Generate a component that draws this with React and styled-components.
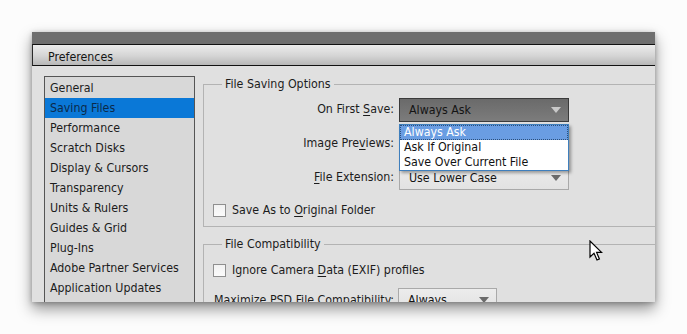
import React from "react";
import styled, { createGlobalStyle } from "styled-components";

const Global = createGlobalStyle`
  html, body { margin: 0; padding: 0; background: #fcfcfc; }
  body {
    font-family: "DejaVu Sans Condensed", "DejaVu Sans", sans-serif;
    font-stretch: condensed;
    font-size: 12.3px;
    color: #1a1a1a;
  }
`;

const Page = styled.div`
  width: 687px;
  height: 334px;
  padding: 32px 0 0 32px;
  box-sizing: border-box;
  overflow: hidden;
`;

const Window = styled.div`
  position: relative;
  width: 623px;
  height: 270px;
  display: flex;
  flex-direction: column;
  background: #e0e0e0;
  box-shadow: 0 7px 14px rgba(0, 0, 0, 0.42), 0 1px 5px rgba(0, 0, 0, 0.25);
  overflow: hidden;
`;

const TopStrip = styled.div`
  height: 12px;
  background: #6e6e6e;
  flex: none;
`;

const TitleBar = styled.div`
  flex: none;
  display: flex;
  align-items: center;
  padding: 3px 0 0 15px;
  box-sizing: content-box;
  height: 17px;
  border-top: 1px solid #111;
  border-bottom: 1px solid #111;
  border-left: 1px solid #2a2a2a;
  background: linear-gradient(#ececec, #d4d4d4 55%, #b7b7b7);
  color: #151515;
`;

const Body = styled.div`
  flex: 1;
  display: flex;
  padding: 10px 0 0 12px;
  min-height: 0;
`;

const Sidebar = styled.ul`
  list-style: none;
  margin: 0;
  padding: 1px 0 0 0;
  width: 151px;
  box-sizing: border-box;
  flex: none;
  border: 1px solid #555;
  border-bottom: none;
  background: #d8d8d8;
`;

const NavItem = styled.li`
  height: 20px;
  line-height: 20px;
  padding-left: 5px;
  white-space: nowrap;
  background: ${(p) => (p.$active ? "#0a78d7" : "transparent")};
  color: ${(p) => (p.$active ? "#0b2a4a" : "#1c1c1c")};
`;

const Main = styled.div`
  flex: 1;
  margin-left: 8px;
  padding-top: 1px;
  display: flex;
  flex-direction: column;
  gap: 10px;
  min-width: 0;
`;

const Group = styled.fieldset`
  margin: 0 -10px 0 0;
  padding: 0;
  border: 1px solid #b3b3b3;
  border-right: none;
  min-width: 0;
`;

const Legend = styled.legend`
  margin-left: 18px;
  padding: 0 3px;
  line-height: 14px;
  color: #1c1c1c;
`;

const GroupInner = styled.div`
  padding: ${(p) => p.$pad};
  display: flex;
  flex-direction: column;
`;

const FormGrid = styled.div`
  display: grid;
  grid-template-columns: 190px 170px;
  column-gap: 5px;
  row-gap: 10px;
  align-items: center;
`;

const Label = styled.span`
  text-align: right;
  white-space: nowrap;
  color: #1c1c1c;
  padding-bottom: 3px;
  u { text-decoration-thickness: 1px; text-underline-offset: 2px; }
`;

const SelectWrap = styled.div`
  position: relative;
`;

const Select = styled.div`
  height: 24px;
  width: ${(p) => p.$w || 170}px;
  box-sizing: border-box;
  display: flex;
  align-items: center;
  justify-content: space-between;
  padding: 0 7px 0 9px;
  border: 1px solid ${(p) => (p.$open ? "#3a3a3a" : "#a9a9a9")};
  background: ${(p) =>
    p.$open
      ? "linear-gradient(#6a6a6a, #7c7c7c)"
      : "linear-gradient(#ececec, #e2e2e2)"};
  color: #141414;
  white-space: nowrap;
  overflow: hidden;
`;

const Arrow = styled.span`
  width: 0;
  height: 0;
  border-left: 5px solid transparent;
  border-right: 5px solid transparent;
  border-top: 6px solid ${(p) => (p.$light ? "#c9c9c9" : "#6b6b6b")};
  flex: none;
`;

const Popup = styled.ul`
  position: absolute;
  left: 0;
  top: 26px;
  width: 170px;
  box-sizing: border-box;
  margin: 0;
  padding: 0;
  list-style: none;
  background: #fff;
  border: 1px solid #3f7fbd;
  box-shadow: 2px 2px 3px rgba(0, 0, 0, 0.35);
  z-index: 5;
`;

const PopupItem = styled.li`
  height: 15px;
  line-height: 15px;
  padding-left: 4px;
  box-sizing: border-box;
  white-space: nowrap;
  background: ${(p) => (p.$active ? "#6a9de2" : "transparent")};
  color: ${(p) => (p.$active ? "#ffffff" : "#111")};
  outline: ${(p) => (p.$active ? "1px dotted #2c4f7a" : "none")};
  outline-offset: -1px;
`;

const CheckRow = styled.label`
  display: flex;
  align-items: center;
  gap: 6px;
  height: 16px;
  margin: ${(p) => p.$m || "0"};
  padding-left: ${(p) => p.$indent || 9}px;
  color: #1c1c1c;
  white-space: nowrap;
  u { text-decoration-thickness: 1px; text-underline-offset: 2px; }
`;

const Box = styled.span`
  width: 13px;
  height: 13px;
  box-sizing: border-box;
  border: 1px solid #8f8f8f;
  background: linear-gradient(#f2f2f2, #fbfbfb);
  flex: none;
`;

const InlineRow = styled.div`
  display: grid;
  grid-template-columns: 184px 99px;
  align-items: center;
  margin-top: 10px;
  padding-left: 10px;
  white-space: nowrap;
  color: #1c1c1c;
`;

const Cursor = styled.svg`
  position: absolute;
  left: 557px;
  top: 208px;
  width: 14px;
  height: 22px;
  z-index: 10;
`;

const nav = [
  "General",
  "Saving Files",
  "Performance",
  "Scratch Disks",
  "Display & Cursors",
  "Transparency",
  "Units & Rulers",
  "Guides & Grid",
  "Plug-Ins",
  "Adobe Partner Services",
  "Application Updates",
];

export default function App() {
  return (
    <>
      <Global />
      <Page>
        <Window>
          <TopStrip />
          <TitleBar>Preferences</TitleBar>
          <Body>
            <Sidebar>
              {nav.map((n) => (
                <NavItem key={n} $active={n === "Saving Files"}>
                  {n}
                </NavItem>
              ))}
            </Sidebar>
            <Main>
              <Group>
                <Legend>File Saving Options</Legend>
                <GroupInner $pad="7px 0 8px 0">
                  <FormGrid>
                    <Label>
                      On First <u>S</u>ave:
                    </Label>
                    <SelectWrap>
                      <Select $open>
                        Always Ask
                        <Arrow $light />
                      </Select>
                      <Popup>
                        <PopupItem $active>Always Ask</PopupItem>
                        <PopupItem>Ask If Original</PopupItem>
                        <PopupItem>Save Over Current File</PopupItem>
                      </Popup>
                    </SelectWrap>
                    <Label>
                      Image Pre<u>v</u>iews:
                    </Label>
                    <SelectWrap>
                      <Select>
                        <span />
                        <Arrow />
                      </Select>
                    </SelectWrap>
                    <Label>
                      <u>F</u>ile Extension:
                    </Label>
                    <SelectWrap>
                      <Select>
                        Use Lower Case
                        <Arrow />
                      </Select>
                    </SelectWrap>
                  </FormGrid>
                  <CheckRow $m="12px 0 0 0">
                    <Box />
                    <span>
                      Save As to <u>O</u>riginal Folder
                    </span>
                  </CheckRow>
                </GroupInner>
              </Group>
              <Group>
                <Legend>File Compatibility</Legend>
                <GroupInner $pad="11px 0 0 0">
                  <CheckRow>
                    <Box />
                    <span>
                      Ignore Camera <u>D</u>ata (EXIF) profiles
                    </span>
                  </CheckRow>
                  <InlineRow>
                    <span>Maximize PSD File Compatibility:</span>
                    <Select $w={99}>
                      Always
                      <Arrow />
                    </Select>
                  </InlineRow>
                </GroupInner>
              </Group>
            </Main>
          </Body>
          <Cursor viewBox="0 0 14 22">
            <path
              d="M1 1 L1 17 L5 13.2 L8 20 L10.4 19 L7.6 12.4 L12.6 12.4 Z"
              fill="#fff"
              stroke="#000"
              strokeWidth="1.2"
              strokeLinejoin="miter"
            />
          </Cursor>
        </Window>
      </Page>
    </>
  );
}
